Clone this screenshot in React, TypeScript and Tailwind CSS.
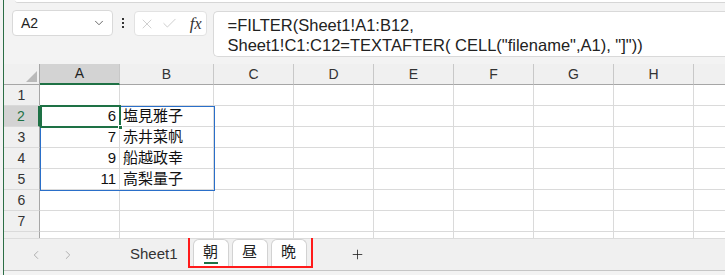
import { ChevronDown, ChevronLeft, ChevronRight, Plus, X, Check } from "lucide-react";

const FONT = "font-['Liberation_Sans','Noto_Sans_CJK_JP',sans-serif]";

const COLUMNS = [
    { name: "A", width: "w-[80px]" },
    { name: "B", width: "w-[94px]" },
    { name: "C", width: "w-[80px]" },
    { name: "D", width: "w-[80px]" },
    { name: "E", width: "w-[80px]" },
    { name: "F", width: "w-[80px]" },
    { name: "G", width: "w-[80px]" },
    { name: "H", width: "w-[80px]" },
    { name: "I", width: "w-[80px]" },
];

const DATA: Record<number, [string, string]> = {
    2: ["6", "塩見雅子"],
    3: ["7", "赤井菜帆"],
    4: ["9", "船越政幸"],
    5: ["11", "高梨量子"],
};

export default function App() {
    return (
        <div className={`w-[725px] h-[275px] overflow-hidden bg-[#f3f3f3] pl-[3px] ${FONT}`}>
            <div className="h-full border-l border-[#2c6e46] flex flex-col">
                <div className="h-[3px] ml-[11px] bg-white border-b border-[#d6d6d6] rounded-bl-[4px]" />
                <FormulaRow />
                <SheetGrid />
                <TabBar />
                <div className="flex-1 bg-[#f3f3f3]" />
            </div>
        </div>
    );
}

function FormulaRow() {
    return (
        <div className="h-[61px] flex items-start pt-[7px] pl-[8px]">
            <div className="w-[101px] h-[26px] bg-white border border-[#d9d9d9] rounded-[4px] flex items-center justify-between pl-[8px] pr-[6px]">
                <span className="text-[14px] text-[#222]">A2</span>
                <ChevronDown size={14} strokeWidth={1.5} className="text-[#555]" />
            </div>

            <div className="w-[21px] h-[26px] flex flex-col items-center justify-center gap-[2px]">
                <span className="w-[2px] h-[2px] bg-[#333]" />
                <span className="w-[2px] h-[2px] bg-[#333]" />
                <span className="w-[2px] h-[2px] bg-[#333]" />
            </div>

            <div className="mt-px w-[73px] h-[25px] bg-white border border-[#e2e2e2] rounded-[4px] flex items-center pl-[4px] pr-[4px] gap-[6px]">
                <X size={16} strokeWidth={1.2} className="text-[#c4c4c4]" />
                <Check size={17} strokeWidth={1.2} className="text-[#c4c4c4]" />
                <span className="ml-auto font-['Liberation_Serif',serif] italic text-[17px] text-[#333] leading-none">
                    f<span className="text-[16px]">x</span>
                </span>
            </div>

            <div className="mt-px ml-[6px] w-[514px] h-[46px] bg-white border border-[#d9d9d9] rounded-l-[5px] border-r-0 pl-[14px] pt-[3px] text-[16.5px] leading-[20px] text-[#222]">
                <div>=FILTER(Sheet1!A1:B12,</div>
                <div>Sheet1!C1:C12=TEXTAFTER( CELL("filename",A1), "]"))</div>
            </div>
        </div>
    );
}

function SheetGrid() {
    const rows = [1, 2, 3, 4, 5, 6, 7, 8];

    return (
        <div className="relative h-[174px] overflow-hidden bg-white">
            <div className="flex h-[21px] bg-[#f0f0f0]">
                <div className="w-[36px] shrink-0 border-r border-b border-[#a6a6a6] flex items-end justify-end pr-[2px] pb-[2px]">
                    <div className="w-0 h-0 border-l-[11px] border-l-transparent border-b-[11px] border-b-[#b9b9b9]" />
                </div>
                {COLUMNS.map((col) => (
                    <div
                        key={col.name}
                        className={`${col.width} shrink-0 flex items-center justify-center text-[14px] border-r border-[#c8c8c8] ${
                            col.name === "A"
                                ? "bg-[#d3d3d3] border-b-2 border-b-[#1e7145] text-[#1f1f1f]"
                                : "border-b border-b-[#a6a6a6] text-[#333]"
                        }`}
                    >
                        {col.name === "I" ? null : col.name}
                    </div>
                ))}
            </div>

            {rows.map((row) => (
                <div key={row} className="flex h-[21px]">
                    <div
                        className={`w-[36px] shrink-0 flex items-center justify-center text-[14px] border-b border-[#dadada] ${
                            row === 2
                                ? "bg-[#d3d3d3] text-[#1e7145] border-r-2 border-r-[#1e7145]"
                                : "bg-[#f0f0f0] text-[#333] border-r border-r-[#a6a6a6]"
                        }`}
                    >
                        {row < 8 ? row : null}
                    </div>
                    {COLUMNS.map((col, i) => (
                        <div
                            key={col.name}
                            className={`${col.width} shrink-0 flex items-center border-r border-b border-[#dadada] text-[15px] text-[#111] ${
                                i === 0 ? "justify-end pr-[3px]" : "pl-[3px]"
                            }`}
                        >
                            {DATA[row] && i < 2 ? DATA[row][i] : null}
                        </div>
                    ))}
                </div>
            ))}

            <div className="absolute left-[36px] top-[42px] w-[175px] h-[85px] border border-[#2a6fc9] pointer-events-none" />
            <div className="absolute left-[36px] top-[41px] w-[81px] h-[23px] border-2 border-[#1e7145] pointer-events-none" />
            <div className="absolute left-[114px] top-[61px] w-[5px] h-[5px] bg-[#1e7145] border border-white" />
        </div>
    );
}

function TabBar() {
    return (
        <div className="h-[33px] shrink-0 bg-[#f0f0f0] border-t border-[#dcdcdc] border-b border-b-[#c6c6c6] flex items-center text-[#333]">
            <ChevronLeft size={14} strokeWidth={1.3} className="ml-[25px] text-[#9a9a9a]" />
            <ChevronRight size={14} strokeWidth={1.3} className="ml-[18px] text-[#9a9a9a]" />
            <span className="ml-[55px] text-[15px] text-[#333]">Sheet1</span>

            <div className="ml-[10px] self-start mt-[-3px] w-[125px] h-[32px] border-2 border-[#ff1a1a] flex items-end pl-[3px] gap-[3px] pt-[1px]">
                <SheetTab label="朝" active />
                <SheetTab label="昼" />
                <SheetTab label="晩" />
            </div>

            <Plus size={15} strokeWidth={1.3} className="ml-[37px] text-[#222]" />
        </div>
    );
}

function SheetTab({ label, active }: { label: string; active?: boolean }) {
    return (
        <div className="w-[36px] h-[27px] bg-white border-x border-t border-[#d2d2d2] rounded-t-[6px] flex flex-col items-center justify-center text-[15px] text-[#222] leading-none">
            <span className="mt-[2px]">{label}</span>
            <span className={`mt-[3px] w-[14px] h-[2px] ${active ? "bg-[#1e7145]" : "bg-transparent"}`} />
        </div>
    );
}
